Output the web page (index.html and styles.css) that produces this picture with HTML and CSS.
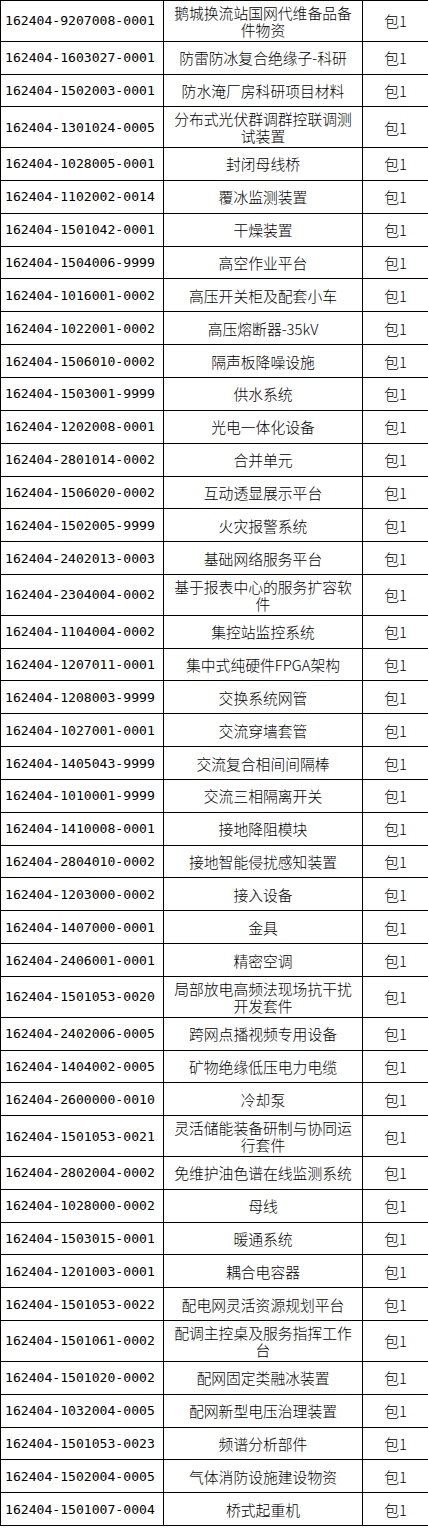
FILE: index.html
```html
<!DOCTYPE html>
<html lang="zh-CN">
<head>
<meta charset="utf-8">
<title>物资清单</title>
<link rel="stylesheet" href="styles.css">
</head>
<body>
<table class="list">
<colgroup><col class="c-code"><col class="c-name"><col class="c-unit"></colgroup>
<tbody>
<tr class="tall"><td class="code">162404-9207008-0001</td><td class="name">鹅城换流站国网代维备品备件物资</td><td class="unit">包1</td></tr>
<tr><td class="code">162404-1603027-0001</td><td class="name">防雷防冰复合绝缘子-科研</td><td class="unit">包1</td></tr>
<tr><td class="code">162404-1502003-0001</td><td class="name">防水淹厂房科研项目材料</td><td class="unit">包1</td></tr>
<tr class="tall"><td class="code">162404-1301024-0005</td><td class="name">分布式光伏群调群控联调测试装置</td><td class="unit">包1</td></tr>
<tr><td class="code">162404-1028005-0001</td><td class="name">封闭母线桥</td><td class="unit">包1</td></tr>
<tr><td class="code">162404-1102002-0014</td><td class="name">覆冰监测装置</td><td class="unit">包1</td></tr>
<tr><td class="code">162404-1501042-0001</td><td class="name">干燥装置</td><td class="unit">包1</td></tr>
<tr><td class="code">162404-1504006-9999</td><td class="name">高空作业平台</td><td class="unit">包1</td></tr>
<tr><td class="code">162404-1016001-0002</td><td class="name">高压开关柜及配套小车</td><td class="unit">包1</td></tr>
<tr><td class="code">162404-1022001-0002</td><td class="name">高压熔断器-35kV</td><td class="unit">包1</td></tr>
<tr><td class="code">162404-1506010-0002</td><td class="name">隔声板降噪设施</td><td class="unit">包1</td></tr>
<tr><td class="code">162404-1503001-9999</td><td class="name">供水系统</td><td class="unit">包1</td></tr>
<tr><td class="code">162404-1202008-0001</td><td class="name">光电一体化设备</td><td class="unit">包1</td></tr>
<tr><td class="code">162404-2801014-0002</td><td class="name">合并单元</td><td class="unit">包1</td></tr>
<tr><td class="code">162404-1506020-0002</td><td class="name">互动透显展示平台</td><td class="unit">包1</td></tr>
<tr><td class="code">162404-1502005-9999</td><td class="name">火灾报警系统</td><td class="unit">包1</td></tr>
<tr><td class="code">162404-2402013-0003</td><td class="name">基础网络服务平台</td><td class="unit">包1</td></tr>
<tr class="tall"><td class="code">162404-2304004-0002</td><td class="name">基于报表中心的服务扩容软件</td><td class="unit">包1</td></tr>
<tr><td class="code">162404-1104004-0002</td><td class="name">集控站监控系统</td><td class="unit">包1</td></tr>
<tr><td class="code">162404-1207011-0001</td><td class="name">集中式纯硬件FPGA架构</td><td class="unit">包1</td></tr>
<tr><td class="code">162404-1208003-9999</td><td class="name">交换系统网管</td><td class="unit">包1</td></tr>
<tr><td class="code">162404-1027001-0001</td><td class="name">交流穿墙套管</td><td class="unit">包1</td></tr>
<tr><td class="code">162404-1405043-9999</td><td class="name">交流复合相间间隔棒</td><td class="unit">包1</td></tr>
<tr><td class="code">162404-1010001-9999</td><td class="name">交流三相隔离开关</td><td class="unit">包1</td></tr>
<tr><td class="code">162404-1410008-0001</td><td class="name">接地降阻模块</td><td class="unit">包1</td></tr>
<tr><td class="code">162404-2804010-0002</td><td class="name">接地智能侵扰感知装置</td><td class="unit">包1</td></tr>
<tr><td class="code">162404-1203000-0002</td><td class="name">接入设备</td><td class="unit">包1</td></tr>
<tr><td class="code">162404-1407000-0001</td><td class="name">金具</td><td class="unit">包1</td></tr>
<tr><td class="code">162404-2406001-0001</td><td class="name">精密空调</td><td class="unit">包1</td></tr>
<tr class="tall"><td class="code">162404-1501053-0020</td><td class="name">局部放电高频法现场抗干扰开发套件</td><td class="unit">包1</td></tr>
<tr><td class="code">162404-2402006-0005</td><td class="name">跨网点播视频专用设备</td><td class="unit">包1</td></tr>
<tr><td class="code">162404-1404002-0005</td><td class="name">矿物绝缘低压电力电缆</td><td class="unit">包1</td></tr>
<tr><td class="code">162404-2600000-0010</td><td class="name">冷却泵</td><td class="unit">包1</td></tr>
<tr class="tall"><td class="code">162404-1501053-0021</td><td class="name">灵活储能装备研制与协同运行套件</td><td class="unit">包1</td></tr>
<tr><td class="code">162404-2802004-0002</td><td class="name">免维护油色谱在线监测系统</td><td class="unit">包1</td></tr>
<tr><td class="code">162404-1028000-0002</td><td class="name">母线</td><td class="unit">包1</td></tr>
<tr><td class="code">162404-1503015-0001</td><td class="name">暖通系统</td><td class="unit">包1</td></tr>
<tr><td class="code">162404-1201003-0001</td><td class="name">耦合电容器</td><td class="unit">包1</td></tr>
<tr><td class="code">162404-1501053-0022</td><td class="name">配电网灵活资源规划平台</td><td class="unit">包1</td></tr>
<tr class="tall"><td class="code">162404-1501061-0002</td><td class="name">配调主控桌及服务指挥工作台</td><td class="unit">包1</td></tr>
<tr><td class="code">162404-1501020-0002</td><td class="name">配网固定类融冰装置</td><td class="unit">包1</td></tr>
<tr><td class="code">162404-1032004-0005</td><td class="name">配网新型电压治理装置</td><td class="unit">包1</td></tr>
<tr><td class="code">162404-1501053-0023</td><td class="name">频谱分析部件</td><td class="unit">包1</td></tr>
<tr><td class="code">162404-1502004-0005</td><td class="name">气体消防设施建设物资</td><td class="unit">包1</td></tr>
<tr><td class="code">162404-1501007-0004</td><td class="name">桥式起重机</td><td class="unit">包1</td></tr>
</tbody>
</table>
</body>
</html>
```

FILE: styles.css
```css
html, body {
  margin: 0;
  padding: 0;
  background: #ffffff;
}

.list {
  width: 428px;
  border-collapse: collapse;
  table-layout: fixed;
  font-family: "Noto Sans CJK SC", "Noto Sans", sans-serif;
  font-weight: 300;
  font-size: 14.8px;
  line-height: 17px;
  color: #000000;
}

.c-code { width: 163px; }
.c-name { width: 199px; }
.c-unit { width: 66px; }

.list tr {
  height: 32.85px;
}

.list tr.tall {
  height: 40.7px;
}

.list td {
  border: 1px solid #000000;
  padding: 0 7px;
  vertical-align: middle;
}

.list td.code {
  text-align: left;
  padding: 0 0 0 4px;
  font-family: "DejaVu Sans Mono", "Liberation Mono", monospace;
  font-weight: 400;
  font-size: 13.1px;
  white-space: nowrap;
}

.list td.name {
  text-align: center;
}

.list td.unit {
  text-align: center;
  padding: 0;
}
```
